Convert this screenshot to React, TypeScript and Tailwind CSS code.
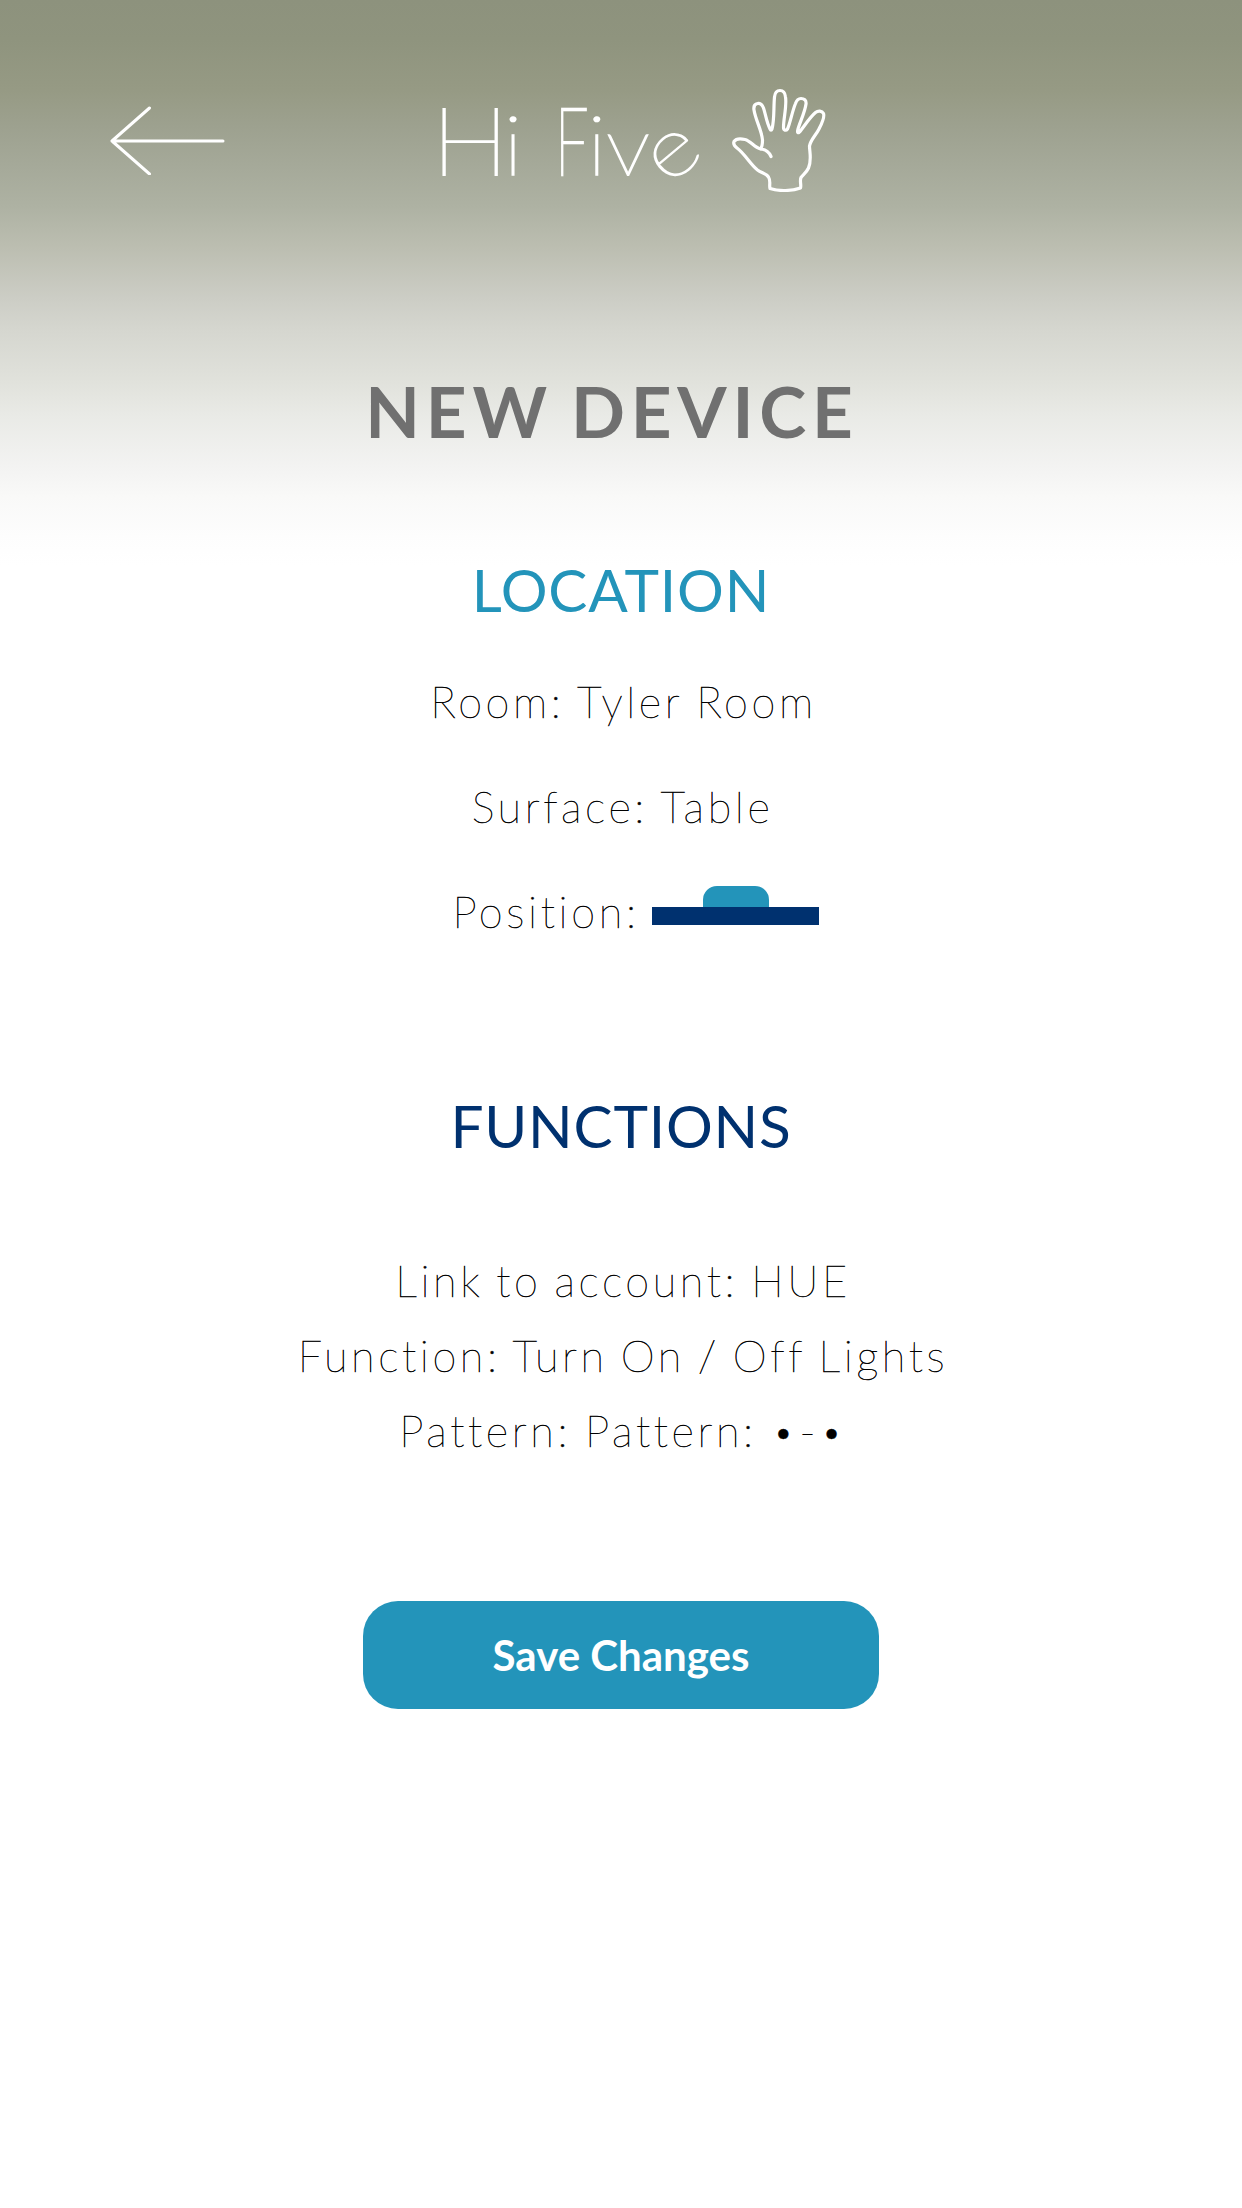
const detail =
  "text-[43.3px] leading-[75px] font-thin text-black whitespace-pre [-webkit-text-stroke:0.5px_black]";
const sectionTitle = "text-[58.5px] leading-[72px] font-normal tracking-[0.8px]";

function BackArrow() {
  return (
    <svg width="116" height="70" viewBox="0 0 116 70" fill="none" stroke="white" strokeWidth="3" strokeLinecap="round" strokeLinejoin="round">
      <path d="M39.5 3L2 36L39.5 69M2 36H113" />
    </svg>
  );
}

function Hand() {
  return (
    <svg width="96" height="104" viewBox="22 18 96 104" fill="none" stroke="white" strokeWidth="3.200" strokeLinecap="round" strokeLinejoin="round">
      <path d="M61 86.500C59 82 55 79.500 50.500 79C44 77.500 41 71 35 69.500C30 68.300 26 68.500 24 71.500C23 74 24.500 76 27 78C35 84 40 94 47.500 100C51.500 103 56 103.500 58.500 107C61 111 59 115 60 118.500C69 121.500 82 121 90.500 118C91.500 115 89.500 111 91 107.500C93 104.500 96.500 102.500 98.500 98C102 90 99.500 82 99.500 76C100.500 70 106 65 109 59C111.500 54 115 47.500 113.500 43.500C112 40.500 108 40.500 105.500 42.500C99 48 94 57 89 62.500C87 63.500 87.500 61 88 59C90 52 95 42 96 34C96.500 30 94 28.500 91 28.500C88 28.500 86.500 30.500 85.500 33.500C82 42 80.500 52 77.500 59C76 61 73.500 60.500 73.500 57.500C73.500 48 77 36 75.500 27C75 22 73 20.500 70 20.500C67 20.500 65 22 64.500 27C63.500 37 64.500 50 62 59C61.500 60.500 60.500 60.500 60 59C56.500 52 55.500 44 53.500 38C52 34 50 33 47.500 33.500C44.500 34 43.500 36.500 44 40C45.500 50 52 61 52.500 70C52.500 73.500 52 77 50.500 79" />
    </svg>
  );
}

function Wordmark() {
  return (
    <h1 className="flex text-[94px] leading-[112px] font-thin text-white [-webkit-text-stroke:1.8px_white]">
      <span className="inline-block scale-x-[1.1]">H</span>
      <span className="inline-block -ml-[2px] origin-[50%_82.5%] scale-y-[0.87]">i</span>
      <span className="inline-block w-[32px]">&nbsp;</span>
      <span className="inline-block w-[32px] origin-left scale-x-[0.63] [-webkit-text-stroke:2.4px_white]">F</span>
      <span className="inline-block origin-[50%_82.5%] scale-y-[0.87]">i</span>
      <span className="inline-block -ml-[1px] origin-[50%_82.5%] scale-x-[0.95] scale-y-[0.87]">v</span>
      <span className="inline-block origin-[51.5%_61.5%] -translate-x-[1px] translate-y-[3px] -rotate-[40deg] scale-x-[1.02] scale-y-[0.86]">e</span>
    </h1>
  );
}

function PositionMarker() {
  return (
    <div className="flex flex-col items-center">
      <div className="ml-px w-[66px] h-[21px] rounded-t-[14px] bg-[#2394ba]" />
      <div className="w-[167px] h-[18px] bg-[#00316f]" />
    </div>
  );
}

export default function App() {
  return (
    <div className="w-[1242px] h-[2208px] overflow-hidden font-['Lato',sans-serif] flex flex-col items-center bg-white bg-[linear-gradient(to_bottom,#8d927d_0px,#8f947e_40px,#969a84_90px,#9da18f_126px,#a5a999_165px,#aeb2a3_207px,#bcbeb1_248px,#cccdc5_298px,#d5d6cf_329px,#e1e2dc_383px,#e9eae6_415px,#f3f3f2_467px,#f9f9f8_497px,#fdfdfd_536px,#ffffff_565px)]">
      <header className="w-full h-[208px] pt-[76px] pl-[110px] flex items-start">
        <div className="pt-[29px] w-[325px]"><BackArrow /></div>
        <div className="w-[297px] pt-[7px]"><Wordmark /></div>
        <div className="pt-[12px]"><Hand /></div>
      </header>
      <h2 className="mt-[159px] pr-[18px] text-[71px] leading-[88px] font-bold tracking-[5.8px] [word-spacing:-4.5px] text-[#707070]">NEW DEVICE</h2>
      <section className="mt-[98px] flex flex-col items-center">
        <h3 className={`${sectionTitle} text-[#2394ba]`}>LOCATION</h3>
        <div className="mt-[39px] flex flex-col items-center gap-[30px]">
          <p className={`${detail} tracking-[3.6px] [word-spacing:-2px] pl-[5px]`}>Room: Tyler Room</p>
          <p className={`${detail} tracking-[3.6px] [word-spacing:-2px] pl-[3px]`}>Surface: Table</p>
          <div className="flex items-center gap-[12px] pl-[29px]">
            <p className={`${detail} tracking-[3.65px]`}>Position:</p>
            <div className="-mt-[12px]"><PositionMarker /></div>
          </div>
        </div>
      </section>
      <section className="mt-[140px] flex flex-col items-center">
        <h3 className={`${sectionTitle} text-[#00316f]`}>FUNCTIONS</h3>
        <div className="mt-[82px] flex flex-col items-center">
          <p className={`${detail} tracking-[3.6px] [word-spacing:-2.9px] pl-[4px]`}>Link to account: HUE</p>
          <p className={`${detail} tracking-[3.6px] [word-spacing:-2.9px] pl-[4px]`}>Function: Turn On / Off Lights</p>
          <p className={`${detail} tracking-[3.6px] [word-spacing:-2px] pl-[5px]`}>Pattern: Pattern: •-•</p>
        </div>
      </section>
      <button className="mt-[133px] w-[516px] h-[108px] rounded-[35px] bg-[#2394ba] text-white text-[42px] font-bold">Save Changes</button>
    </div>
  );
}
